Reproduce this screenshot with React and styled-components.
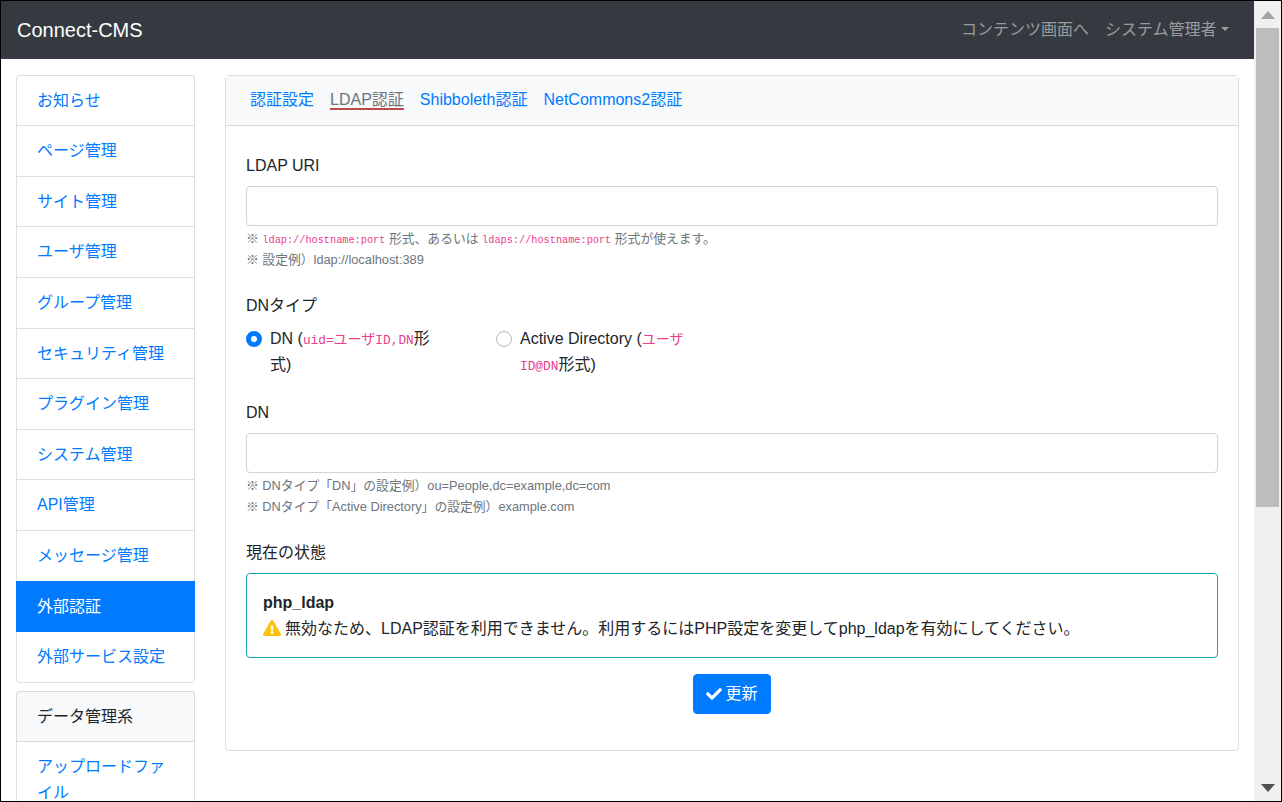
import React from "react";
import styled, { createGlobalStyle } from "styled-components";
import { FaCheck, FaExclamationTriangle } from "react-icons/fa";

const Global = createGlobalStyle`
  html, body { margin: 0; padding: 0; height: 100%; overflow: hidden; background: #fff; }
  * { box-sizing: border-box; }
  body {
    font-family: "Liberation Sans", "Noto Sans CJK JP", sans-serif;
    font-size: 16px;
    line-height: 1.6;
    color: #212529;
  }
`;

const Frame = styled.div`
  width: 1282px;
  height: 802px;
  border: 1px solid #000;
  display: flex;
  overflow: hidden;
`;
const Page = styled.div`
  flex: 1;
  min-width: 0;
  display: flex;
  flex-direction: column;
  overflow: hidden;
`;
const Scrollbar = styled.div`
  width: 27px;
  flex: none;
  background: #f0f0f0;
  display: flex;
  flex-direction: column;
  align-items: center;
  justify-content: space-between;
`;
const ScrollButton = styled.div`
  height: 27px;
  width: 100%;
  display: flex;
  align-items: center;
  justify-content: center;
`;
const ScrollThumb = styled.div`
  width: 23px;
  height: 479px;
  background: #bdbdbd;
`;
const ScrollTrack = styled.div`
  flex: 1;
  width: 100%;
  display: flex;
  justify-content: center;
`;

const Navbar = styled.header`
  height: 57.6px;
  flex: none;
  background: #343a40;
  display: flex;
  align-items: center;
  justify-content: space-between;
  padding: 0 25px 0 16px;
`;
const Brand = styled.a`
  color: #fff;
  font-size: 20px;
`;
const NavLinks = styled.nav`
  display: flex;
  gap: 16px;
`;
const NavLink = styled.a`
  color: rgba(255, 255, 255, 0.5);
  display: flex;
  align-items: center;
`;
const Caret = styled.span`
  margin-left: 4.5px;
  margin-top: -2px;
  border-top: 4.8px solid rgba(255, 255, 255, 0.5);
  border-left: 4.8px solid transparent;
  border-right: 4.8px solid transparent;
`;

const Body = styled.div`
  flex: 1;
  min-height: 0;
  display: flex;
  gap: 30px;
  padding: 16px 15px 0 15px;
  overflow: hidden;
`;
const Side = styled.aside`
  width: 179px;
  flex: none;
  display: flex;
  flex-direction: column;
  gap: 8px;
`;
const ListGroup = styled.div`
  flex: none;
  & > *:first-child {
    border-top-width: 1px;
    border-top-left-radius: 4px;
    border-top-right-radius: 4px;
  }
  & > *:last-child {
    border-bottom-left-radius: 4px;
    border-bottom-right-radius: 4px;
  }
`;
const ListItem = styled.a`
  display: block;
  padding: 12px 20px;
  border: 1px solid ${(p) => (p.$active ? "#007bff" : "rgba(0,0,0,.125)")};
  border-top-width: ${(p) => (p.$active ? "1px" : "0")};
  margin-top: ${(p) => (p.$active ? "-1px" : "0")};
  color: ${(p) => (p.$active ? "#fff" : "#007bff")};
  background: ${(p) => (p.$active ? "#007bff" : "#fff")};
`;
const ListHeader = styled.div`
  padding: 12px 20px;
  border: 1px solid rgba(0, 0, 0, 0.125);
  color: #212529;
  background: #f8f9fa;
`;

const Card = styled.main`
  flex: 1;
  min-width: 0;
  height: 676.4px;
  border: 1px solid rgba(0, 0, 0, 0.125);
  border-radius: 4px;
`;
const CardHeader = styled.div`
  height: 50px;
  background: #f8f9fa;
  border-bottom: 1px solid rgba(0, 0, 0, 0.125);
  display: flex;
  gap: 16px;
  align-items: center;
  padding: 0 24px;
`;
const Tab = styled.a`
  color: ${(p) => (p.$active ? "#6c757d" : "#007bff")};
  line-height: 16px;
  border-bottom: ${(p) => (p.$active ? "2px solid #b94a48" : "2px solid transparent")};
  margin-top: 2px;
`;
const CardBody = styled.div`
  padding: 26.8px 20px 0;
`;
const Group = styled.div`
  margin-bottom: ${(p) => p.$gap};
`;
const Label = styled.div`
  padding-top: ${(p) => (p.$flat ? "0" : "1px")};
  margin-bottom: ${(p) => (p.$flat ? "8px" : "7px")};
`;
const Input = styled.input`
  display: block;
  width: 100%;
  height: 39.6px;
  border: 1px solid #ced4da;
  border-radius: 4px;
  background: #fff;
`;
const Help = styled.div`
  margin-top: 3.6px;
  font-size: 12.8px;
  line-height: 20.48px;
  color: #6c757d;
`;
const Code = styled.code`
  font-family: "Liberation Mono", "Noto Sans CJK JP", monospace;
  font-size: 10.25px;
  line-height: 0;
  color: #e83e8c;
`;
const RadioCode = styled.code`
  font-family: "Liberation Mono", "Noto Sans CJK JP", monospace;
  font-size: 14px;
  line-height: 0;
  color: #e83e8c;
`;
const Latin = styled.span`
  font-size: 12.8px;
`;
const Radios = styled.div`
  display: flex;
  gap: 58px;
`;
const Radio = styled.label`
  width: 192px;
  display: flex;
  gap: 8px;
`;
const RadioMark = styled.span`
  width: 16px;
  height: 16px;
  flex: none;
  margin-top: 5px;
  border-radius: 50%;
  background: #fff;
  border: ${(p) => (p.$on ? "5px solid #007bff" : "1px solid #adb5bd")};
`;
const RadioText = styled.span`
  min-width: 0;
`;
const Alert = styled.div`
  border: 1px solid #17a2b8;
  border-radius: 4px;
  padding: 16px;
  margin-bottom: 16px;
`;
const AlertTitle = styled.div`
  font-weight: 700;
`;
const Warn = styled(FaExclamationTriangle)`
  color: #ffc107;
  width: 18px;
  height: 16px;
  vertical-align: -2px;
  margin-right: 4px;
`;
const Actions = styled.div`
  display: flex;
  justify-content: center;
`;
const Button = styled.button`
  height: 40px;
  width: 78px;
  border: 1px solid #007bff;
  border-radius: 4px;
  background: #007bff;
  color: #fff;
  font: inherit;
  display: flex;
  align-items: center;
  justify-content: center;
  gap: 3px;
  padding: 0;
`;

const sideItems = [
  "お知らせ", "ページ管理", "サイト管理", "ユーザ管理", "グループ管理", "セキュリティ管理",
  "プラグイン管理", "システム管理", "API管理", "メッセージ管理", "外部認証", "外部サービス設定",
];

export default function App() {
  return (
    <>
      <Global />
      <Frame>
        <Page>
          <Navbar>
            <Brand>Connect-CMS</Brand>
            <NavLinks>
              <NavLink>コンテンツ画面へ</NavLink>
              <NavLink>システム管理者<Caret /></NavLink>
            </NavLinks>
          </Navbar>
          <Body>
            <Side>
              <ListGroup>
                {sideItems.map((t) => (
                  <ListItem key={t} $active={t === "外部認証"}>{t}</ListItem>
                ))}
              </ListGroup>
              <ListGroup>
                <ListHeader>データ管理系</ListHeader>
                <ListItem>アップロードファイル</ListItem>
              </ListGroup>
            </Side>
            <Card>
              <CardHeader>
                <Tab>認証設定</Tab>
                <Tab $active>LDAP認証</Tab>
                <Tab>Shibboleth認証</Tab>
                <Tab>NetCommons2認証</Tab>
              </CardHeader>
              <CardBody>
                <Group $gap="22.4px">
                  <Label>LDAP URI</Label>
                  <Input type="text" />
                  <Help>
                    <div>※ <Code>ldap://hostname:port</Code> 形式、あるいは <Code>ldaps://hostname:port</Code> 形式が使えます。</div>
                    <div>※ 設定例）ldap://localhost:389</div>
                  </Help>
                </Group>
                <Group $gap="22.2px">
                  <Label $flat>DNタイプ</Label>
                  <Radios>
                    <Radio>
                      <RadioMark $on />
                      <RadioText>DN (<RadioCode><Latin>uid=</Latin>ユーザ<Latin>ID,DN</Latin></RadioCode>形式)</RadioText>
                    </Radio>
                    <Radio>
                      <RadioMark />
                      <RadioText>Active Directory (<RadioCode>ユーザ<Latin>ID@DN</Latin></RadioCode>形式)</RadioText>
                    </Radio>
                  </Radios>
                </Group>
                <Group $gap="22.2px">
                  <Label $flat>DN</Label>
                  <Input type="text" />
                  <Help>
                    <div>※ DNタイプ「DN」の設定例）ou=People,dc=example,dc=com</div>
                    <div>※ DNタイプ「Active Directory」の設定例）example.com</div>
                  </Help>
                </Group>
                <Label>現在の状態</Label>
                <Alert>
                  <AlertTitle>php_ldap</AlertTitle>
                  <div><Warn />無効なため、LDAP認証を利用できません。利用するにはPHP設定を変更してphp_ldapを有効にしてください。</div>
                </Alert>
                <Actions>
                  <Button><FaCheck size={16} />更新</Button>
                </Actions>
              </CardBody>
            </Card>
          </Body>
        </Page>
        <Scrollbar>
          <ScrollButton>
            <svg width="14" height="8" viewBox="0 0 14 8"><path d="M7 0L14 8H0z" fill="#a3a3a3" /></svg>
          </ScrollButton>
          <ScrollTrack><ScrollThumb /></ScrollTrack>
          <ScrollButton>
            <svg width="14" height="8" viewBox="0 0 14 8"><path d="M0 0H14L7 8z" fill="#505050" /></svg>
          </ScrollButton>
        </Scrollbar>
      </Frame>
    </>
  );
}
